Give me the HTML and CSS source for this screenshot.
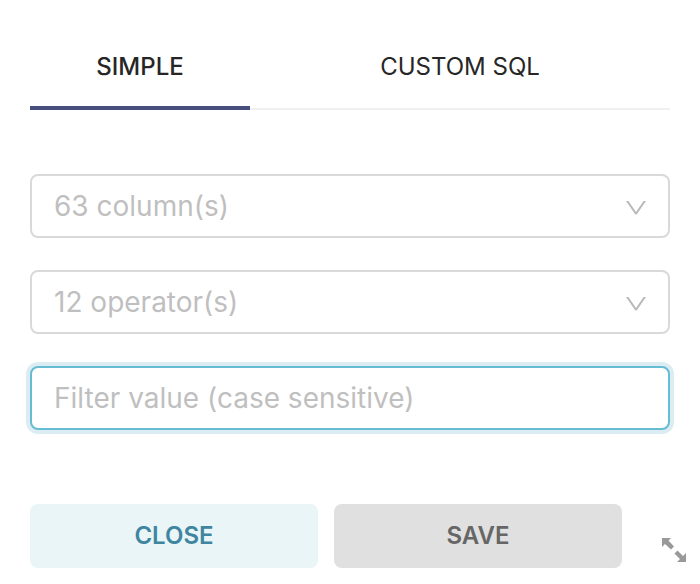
FILE: index.html
```
<!DOCTYPE html>
<html lang="en">
<head>
<meta charset="utf-8">
<title>Filter</title>
<link rel="stylesheet" href="styles.css">
</head>
<body>
<form class="editor">
  <div class="tabs" role="tablist">
    <button class="tab tab-active" type="button" role="tab" aria-selected="true">SIMPLE</button>
    <button class="tab tab-wide" type="button" role="tab" aria-selected="false">CUSTOM SQL</button>
  </div>
  <div class="fields">
    <div class="select-wrap">
      <select class="control" aria-label="Column"><option>63 column(s)</option></select>
      <svg class="chevron" viewBox="0 0 20 16" aria-hidden="true"><path d="M0 1h2.400L10 12 17.600 1H20L11 14q-1 1-2 0z"/></svg>
    </div>
    <div class="select-wrap">
      <select class="control" aria-label="Operator"><option>12 operator(s)</option></select>
      <svg class="chevron" viewBox="0 0 20 16" aria-hidden="true"><path d="M0 1h2.400L10 12 17.600 1H20L11 14q-1 1-2 0z"/></svg>
    </div>
    <input class="control control-focus" type="text" aria-label="Filter value" placeholder="Filter value (case sensitive)">
  </div>
  <div class="actions">
    <button class="button button-close" type="button">CLOSE</button>
    <button class="button button-save" type="button">SAVE</button>
    <svg class="resize" viewBox="0 0 24 24" aria-hidden="true"><path d="M0 0h9L6.500 2.500 12 8.500 9 11.500 3 6 0 9zM24 24h-9l3-3-5.500-5.500 3-3L21 18l3-3z"/></svg>
  </div>
</form>
</body>
</html>
```
FILE: styles.css
```
* { box-sizing: border-box; }
body { margin: 0; background: #fff; font-family: Inter, "Liberation Sans", sans-serif; }
.editor { padding: 24px 30px 16px; }
.tabs { display: flex; border-bottom: 2px solid #f0f0f0; }
.tab { flex: 11; height: 86px; margin-bottom: -2px; padding: 4px 0 0; border: 0; border-bottom: 4px solid transparent; background: none; color: #262626; font: 400 24px/36px Inter, sans-serif; }
.tab-wide { flex: 21; }
.tab-active { border-bottom-color: #484f7c; font-weight: 500; }
.fields { display: grid; gap: 32px; margin-top: 64px; }
.select-wrap { position: relative; }
.control { display: block; width: 100%; height: 64px; padding: 0 22px; border: 2px solid #d9d9d9; border-radius: 8px; background: #fff; color: #bfbfbf; font: 400 28px/36px Inter, sans-serif; appearance: none; outline: 0; }
.control::placeholder { color: #bfbfbf; opacity: 1; }
.control-focus { border-color: #66bcd2; box-shadow: 0 0 0 4px #dbecf2; }
.chevron { position: absolute; right: 24px; top: 26px; width: 20px; height: 16px; fill: #b8b8b8; pointer-events: none; }
.actions { display: flex; gap: 16px; margin: 74px -16px 0 0; }
.button { flex: 1; height: 64px; padding: 0; border: 0; border-radius: 8px; font: 600 24px/36px Inter, sans-serif; }
.button-close { background: #e9f5f7; color: #3f85a1; }
.button-save { background: #e0e0e0; color: #666; }
.resize { align-self: flex-end; width: 24px; height: 24px; margin: 0 0 6px 24px; fill: #999; }
```
